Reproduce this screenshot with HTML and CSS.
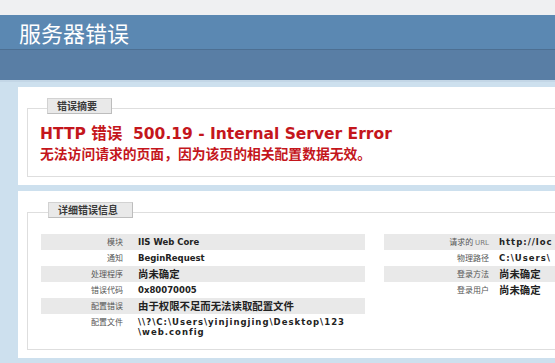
FILE: index.html
```html
<!DOCTYPE html>
<html lang="zh-CN">
<head>
<meta charset="utf-8">
<title>IIS 8.5 详细错误 - 500.19 - Internal Server Error</title>
<link rel="stylesheet" href="styles.css">
</head>
<body>
<div class="topbar"></div>
<div class="header"><h1 class="title">服务器错误</h1></div>
<div class="server-version"></div>
<div class="content">
  <div class="panel">
    <div class="fs fs-summary">
      <div class="legend">错误摘要</div>
      <h2 class="err-title">HTTP 错误&nbsp; 500.19 - Internal Server Error</h2>
      <h3 class="err-desc">无法访问请求的页面，因为该页的相关配置数据无效。</h3>
    </div>
  </div>
  <div class="panel">
    <div class="fs fs-details">
      <div class="legend">详细错误信息</div>
      <div class="details">
        <div class="tbl tbl-left">
          <div class="row alt"><span class="lbl">模块</span><span class="val">IIS Web Core</span></div>
          <div class="row"><span class="lbl">通知</span><span class="val">BeginRequest</span></div>
          <div class="row alt"><span class="lbl">处理程序</span><span class="val cjk">尚未确定</span></div>
          <div class="row"><span class="lbl">错误代码</span><span class="val">0x80070005</span></div>
          <div class="row alt"><span class="lbl">配置错误</span><span class="val cjk">由于权限不足而无法读取配置文件</span></div>
          <div class="row tall"><span class="lbl">配置文件</span><span class="val path">\\?\C:\Users\yinjingjing\Desktop\123<br>\web.config</span></div>
        </div>
        <div class="tbl tbl-right">
          <div class="row alt"><span class="lbl">请求的 <span class="url">URL</span></span><span class="val path">http://loc</span></div>
          <div class="row"><span class="lbl">物理路径</span><span class="val path">C:\Users\</span></div>
          <div class="row alt"><span class="lbl">登录方法</span><span class="val cjk">尚未确定</span></div>
          <div class="row"><span class="lbl">登录用户</span><span class="val cjk">尚未确定</span></div>
        </div>
      </div>
    </div>
  </div>
</div>
</body>
</html>
```
FILE: styles.css
```css
html, body {
  margin: 0;
  padding: 0;
}
body {
  width: 555px;
  height: 363px;
  overflow: hidden;
  background: #cde0ee;
  font-family: "DejaVu Sans", "Noto Sans CJK SC", sans-serif;
}
.topbar {
  height: 15px;
  background: #eff0f2;
}
.header {
  height: 34px;
  padding-left: 19px;
  background: #5b88b2;
}
.title {
  margin: 0;
  font-family: "Noto Sans CJK SC", sans-serif;
  font-weight: normal;
  font-size: 22px;
  line-height: 34px;
  color: #ffffff;
}
.server-version {
  height: 30px;
  background: #597ea5;
  border-top: 1px solid #4d6f92;
  border-bottom: 2px solid #c3d6e6;
}
.content {
  margin-left: 18px;
  padding-top: 5px;
}
.panel {
  width: 620px;
  background: #ffffff;
  padding: 21px 0 8px 9px;
  margin-bottom: 6px;
}
.fs {
  border: 1px solid #dedede;
}
.legend {
  width: fit-content;
  height: 14px;
  margin: -11px 0 0 7px;
  padding: 0 14px 0 9px;
  background: #e9e9e9;
  border: 1px solid #d2d2d2;
  border-right-color: #bdbdbd;
  border-bottom-color: #bdbdbd;
  font-family: "Noto Sans CJK SC", sans-serif;
  font-weight: bold;
  font-size: 10px;
  line-height: 14px;
  color: #3a3a3a;
}
.fs-summary {
  padding: 0 0 14px 12px;
}
.err-title {
  margin: 10px 0 0;
  font-size: 15.5px;
  line-height: 20px;
  font-weight: bold;
  color: #c4161c;
}
.err-desc {
  margin: 0;
  font-family: "Noto Sans CJK SC", sans-serif;
  font-size: 13.8px;
  line-height: 18px;
  font-weight: bold;
  color: #c4161c;
}
.fs-details {
  padding: 0 0 12px 13px;
}
.details {
  display: flex;
  gap: 19px;
  margin-top: 16px;
}
.tbl-left {
  width: 324px;
}
.tbl-right {
  flex: 1;
}
.row {
  display: grid;
  align-items: center;
  height: 16px;
}
.tbl-left .row {
  grid-template-columns: 82px 1fr;
  column-gap: 15px;
}
.tbl-right .row {
  grid-template-columns: 105px 1fr;
  column-gap: 10px;
}
.row.alt {
  background: #e9e9e9;
}
.row.tall {
  height: auto;
  align-items: start;
  padding-top: 3px;
}
.lbl {
  text-align: right;
  font-family: "Noto Sans CJK SC", sans-serif;
  font-size: 8px;
  line-height: 10px;
  color: #555555;
  white-space: nowrap;
}
.url {
  font-family: "DejaVu Sans", sans-serif;
  font-size: 7px;
  color: #777777;
}
.val {
  font-family: "DejaVu Sans", "Noto Sans CJK SC", sans-serif;
  font-weight: bold;
  font-size: 8.5px;
  line-height: 10px;
  color: #222222;
  white-space: nowrap;
}
.val.path {
  letter-spacing: 1px;
}
.val.cjk {
  font-family: "Noto Sans CJK SC", sans-serif;
  font-size: 10.4px;
}
```
